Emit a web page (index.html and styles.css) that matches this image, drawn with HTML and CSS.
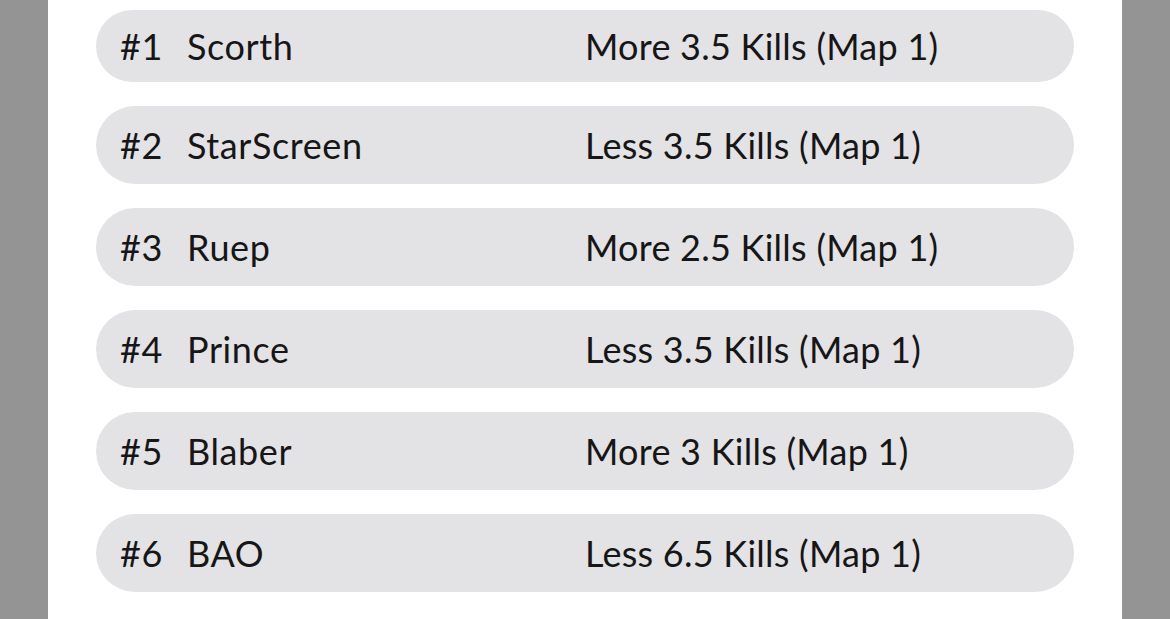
FILE: index.html
```html
<!DOCTYPE html>
<html>
<head>
<meta charset="utf-8">
<link rel="stylesheet" href="styles.css">
</head>
<body>
<div class="panel">
  <div class="list">
    <div class="row first"><span class="rank">#1</span><span class="name">Scorth</span><span class="pick">More 3.5 Kills (Map 1)</span></div>
    <div class="row"><span class="rank">#2</span><span class="name">StarScreen</span><span class="pick">Less 3.5 Kills (Map 1)</span></div>
    <div class="row"><span class="rank">#3</span><span class="name">Ruep</span><span class="pick">More 2.5 Kills (Map 1)</span></div>
    <div class="row"><span class="rank">#4</span><span class="name">Prince</span><span class="pick">Less 3.5 Kills (Map 1)</span></div>
    <div class="row"><span class="rank">#5</span><span class="name">Blaber</span><span class="pick">More 3 Kills (Map 1)</span></div>
    <div class="row"><span class="rank">#6</span><span class="name">BAO</span><span class="pick">Less 6.5 Kills (Map 1)</span></div>
  </div>
</div>
</body>
</html>
```

FILE: styles.css
```css
html, body {
  margin: 0;
  padding: 0;
  background: #949494;
  height: 619px;
  overflow: hidden;
}
.panel {
  margin: 0 48px;
  background: #ffffff;
  height: 619px;
  padding: 10px 48px 0;
  box-sizing: border-box;
}
.list {
  display: flex;
  flex-direction: column;
  gap: 24px;
}
.row {
  height: 78px;
  background: #e3e3e5;
  border-radius: 39px;
  display: grid;
  grid-template-columns: 67px 398px auto;
  align-items: center;
  padding-left: 24px;
  color: #161616;
  font-family: Lato, "Noto Sans", sans-serif;
  font-size: 36px;
  line-height: 1;
  letter-spacing: 0.6px;
}
.row.first {
  height: 72px;
  border-radius: 36px;
}
.pick {
  letter-spacing: 0.25px;
}
```
